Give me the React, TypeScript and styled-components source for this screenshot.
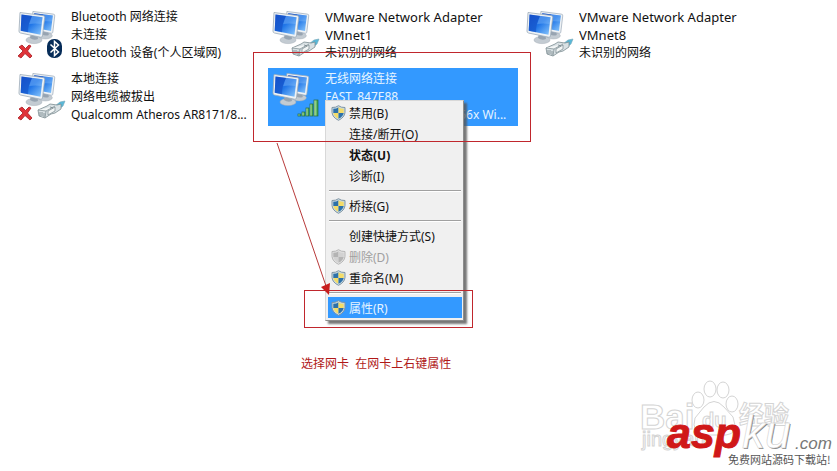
import React from "react";
import styled, { createGlobalStyle, css } from "styled-components";

const uiFont = `"Noto Sans", "Noto Sans CJK SC", sans-serif`;

const GlobalStyle = createGlobalStyle`
  body { margin: 0; background: #fff; }
  * { box-sizing: border-box; }
`;

const Page = styled.main`
  position: relative;
  min-height: 100vh;
  padding: 6px 0 0 14px;
  overflow: hidden;
  font-family: ${uiFont};
  font-size: 12px;
  color: #111;
`;

const ConnectionList = styled.ul`
  display: grid;
  grid-template-columns: repeat(auto-fill, 250px);
  gap: 4px;
  margin: 0;
  padding: 0;
  list-style: none;
`;

const Tile = styled.button<{ $selected?: boolean }>`
  display: flex;
  align-items: flex-start;
  gap: 4px;
  width: 100%;
  min-height: 58px;
  padding: 2px 3px;
  border: 0;
  background: ${(p) => (p.$selected ? "#3399ff" : "transparent")};
  color: ${(p) => (p.$selected ? "#e6f4ff" : "inherit")};
  font: inherit;
  text-align: left;
`;

const TileIcon = styled.svg`
  flex: none;
  width: 50px;
  height: 54px;
`;

const TileText = styled.span`
  display: block;
  flex: 1;
  min-width: 0;
`;

const TileLine = styled.span<{ $latin?: boolean }>`
  display: block;
  overflow: hidden;
  font-size: ${(p) => (p.$latin ? 13 : 12)}px;
  line-height: 18px;
  text-overflow: ellipsis;
  white-space: nowrap;
`;

const Menu = styled.div`
  position: absolute;
  top: 100px;
  left: 325px;
  width: 139px;
  padding: 1px 1px 2px 2px;
  border: 1px solid #d8d8d8;
  border-right-color: #8c8c8c;
  border-bottom-color: #8c8c8c;
  background: #f0f0f0;
  box-shadow: 3px 3px 2px #555c;
`;

const MenuItem = styled.button<{ $bold?: boolean; $active?: boolean }>`
  display: flex;
  align-items: center;
  gap: 3px;
  width: 100%;
  height: 21px;
  padding: 0 3px;
  border: 0;
  background: transparent;
  color: #111;
  font: inherit;
  font-weight: ${(p) => (p.$bold ? 700 : 400)};
  white-space: nowrap;
  &:disabled { color: #a0a0a0; }
  ${(p) => p.$active && css`background: #3399ff; color: #e6f4ff;`}
`;

const IconSlot = styled.span`
  display: flex;
  flex: none;
  width: 15px;
  height: 16px;
`;

const Separator = styled.hr`
  height: 2px;
  margin: 4px 1px 3px;
  border: 0;
  border-top: 1px solid #a0a0a0;
  background: #fff;
`;

const Highlight = styled.div<{ $x: number; $y: number; $w: number; $h: number }>`
  position: absolute;
  left: ${(p) => p.$x}px;
  top: ${(p) => p.$y}px;
  width: ${(p) => p.$w}px;
  height: ${(p) => p.$h}px;
  border: 1px solid #c0272d;
  pointer-events: none;
`;

const Arrow = styled.svg`
  position: absolute;
  top: 142px;
  left: 274px;
  width: 60px;
  height: 156px;
  pointer-events: none;
`;

const Caption = styled.p`
  position: absolute;
  top: 355px;
  left: 301px;
  margin: 0;
  color: #b01818;
  line-height: 18px;
  white-space: pre;
`;

const Watermark = styled.svg`
  position: absolute;
  right: 0;
  bottom: 0;
  width: 201px;
  height: 95px;
`;

type Badge = "bluetooth" | "cable" | "signal";

function Monitor({ x, y, w }: { x: number; y: number; w: number }) {
  return (
    <g transform={`translate(${x} ${y}) scale(${w / 26})`}>
      <ellipse cx="15" cy="28" rx="8" ry="3.6" fill="#c3cbd2" stroke="#a2abb4" strokeWidth=".5" />
      <path d="M12 21h6l1 6q-4 2-8-1z" fill="#97a4b1" />
      <path d="M1 0.500 24 3.500Q26 3.800 25.700 5.500L23.500 24Q23.200 25.500 21.500 25.200L1.500 21Q-.2 20.500 0 19Z" fill="#eef2f5" stroke="#9ba9b8" strokeWidth=".8" />
      <path d="M2.500 2.500 23.500 5.200 21.500 22.700 1.700 18.800Z" fill="url(#screen)" />
      <path d="M2.500 2.500 13 3.900Q9 11 9 20.200L1.700 18.800Z" fill="#0b3db5" opacity=".42" />
      <path d="M13 3.900 23.500 5.200 22.800 12Q16 11 10.200 12Z" fill="#a6d5ff" opacity=".3" />
    </g>
  );
}

function ConnectionIcon({ badge, offline }: { badge: Badge; offline?: boolean }) {
  return (
    <TileIcon viewBox="0 0 50 54" aria-hidden="true">
      <defs>
        <linearGradient id="screen" x1="0" y1="0" x2="1" y2="1">
          <stop offset="0" stopColor="#1c5cd8" />
          <stop offset=".5" stopColor="#2277e8" />
          <stop offset="1" stopColor="#8bc8fc" />
        </linearGradient>
        <linearGradient id="bars" x1="0" y1="0" x2="1" y2="0">
          <stop offset="0" stopColor="#c8f0b4" />
          <stop offset="1" stopColor="#2d9a3f" />
        </linearGradient>
      </defs>
      <Monitor x={15} y={3} w={23} />
      <Monitor x={2} y={4} w={26} />
      {badge === "bluetooth" && (
        <g>
          <rect x="30" y="31" width="15" height="19" rx="7" fill="#062c58" />
          <path d="m33.500 36.500 8 7.500-4 3.500v-14l4 3.500-8 7.500" fill="none" stroke="#fff" strokeWidth="1.500" />
        </g>
      )}
      {badge === "cable" && (
        <g strokeLinejoin="round">
          <path d="M38 36 43 32 48 31 46 36 41 40Z" fill="#58b8d8" stroke="#78a7b9" strokeWidth=".6" />
          <path d="M21 40 30 36 33 34 40 35 44 34 44 39 38 43 34 44 28 48 22 46Z" fill="#d9e1e4" stroke="#7b8b91" strokeWidth=".8" />
          <path d="M21 40 29 41 38 36M29 41 28 48M31 41 38 37 38 41 31 45Z" fill="#f3f6f6" stroke="#849398" strokeWidth=".8" />
          <path d="M23 42v4M25 42v4M27 43v4M33 37l3 1" stroke="#718086" strokeWidth=".8" />
        </g>
      )}
      {badge === "signal" && (
        <g fill="url(#bars)" stroke="#236a3e" strokeWidth=".7">
          <rect x="27" y="44" width="3" height="2" />
          <rect x="31" y="42" width="3" height="4" />
          <rect x="35" y="38" width="3" height="8" />
          <rect x="39" y="34" width="3" height="12" />
          <rect x="43" y="30" width="4" height="16" />
        </g>
      )}
      {offline && (
        <path d="M2 39 5 37 8.500 40.500 12 37 14 38 10.500 43 15 48 13 50 8 45.500 4 50 1 48 6 43Z" fill="#e03238" stroke="#a61920" strokeWidth=".8" />
      )}
    </TileIcon>
  );
}

function Shield({ muted }: { muted?: boolean }) {
  const blue = muted ? "#b4b4b4" : "#2d71a9";
  const yellow = muted ? "#d2d2d2" : "#f3dc68";
  return (
    <svg width="15" height="16" viewBox="0 0 15 16" aria-hidden="true">
      <path d="M7.500 .7Q10 2.700 14 2.500V7.500Q13.500 12.500 7.500 15.300 1.500 12.500 1 7.500V2.500Q5 2.700 7.500 .7Z" fill={muted ? "#e2e2e2" : "#cbdbe4"} stroke={muted ? "#b6b6b6" : "#7f95a3"} />
      <path d="M7.500 2.300V8H2.300V3.800Q5.500 3.800 7.500 2.300Z" fill={blue} />
      <path d="M7.500 2.300Q9.500 3.800 12.700 3.800V8H7.500Z" fill={yellow} />
      <path d="M2.300 8H7.500V13.800Q3 11.800 2.300 8Z" fill={yellow} />
      <path d="M7.500 8H12.700Q12 11.800 7.500 13.800Z" fill={blue} />
    </svg>
  );
}

type Connection = {
  lines: { text: string; latin?: boolean }[];
  badge: Badge;
  offline?: boolean;
  selected?: boolean;
};

const connections: Connection[] = [
  { badge: "bluetooth", offline: true, lines: [{ text: "Bluetooth 网络连接" }, { text: "未连接" }, { text: "Bluetooth 设备(个人区域网)" }] },
  { badge: "cable", lines: [{ text: "VMware Network Adapter", latin: true }, { text: "VMnet1", latin: true }, { text: "未识别的网络" }] },
  { badge: "cable", lines: [{ text: "VMware Network Adapter", latin: true }, { text: "VMnet8", latin: true }, { text: "未识别的网络" }] },
  { badge: "cable", offline: true, lines: [{ text: "本地连接" }, { text: "网络电缆被拔出" }, { text: "Qualcomm Atheros AR8171/8..." }] },
  { badge: "signal", selected: true, lines: [{ text: "无线网络连接" }, { text: "FAST_847E88" }, { text: "Qualcomm Atheros AR956x Wi..." }] },
];

type Entry = { label: string; shield?: boolean; bold?: boolean; disabled?: boolean; active?: boolean };

const menuGroups: Entry[][] = [
  [{ label: "禁用(B)", shield: true }, { label: "连接/断开(O)" }, { label: "状态(U)", bold: true }, { label: "诊断(I)" }],
  [{ label: "桥接(G)", shield: true }],
  [{ label: "创建快捷方式(S)" }, { label: "删除(D)", shield: true, disabled: true }, { label: "重命名(M)", shield: true }],
  [{ label: "属性(R)", shield: true, active: true }],
];

function SiteWatermark() {
  return (
    <Watermark viewBox="0 0 201 95">
      <g fill="#fff" stroke="#d4d4d4" strokeWidth="1">
        <text x="4" y="53" fontFamily="Liberation Sans, sans-serif" fontWeight="700" fontSize="35">Bai</text>
        <ellipse cx="62" cy="24" rx="6" ry="8" />
        <ellipse cx="74" cy="13" rx="6" ry="8" />
        <ellipse cx="87" cy="14" rx="6" ry="8" />
        <ellipse cx="96" cy="28" rx="6" ry="8" />
        <path d="M68 31Q78 20 88 31L97 41Q103 58 90 59H68Q55 57 59 42Z" />
        <text x="66" y="51" fontFamily="Liberation Sans, sans-serif" fontWeight="700" fontSize="20">du</text>
        <text x="103" y="48" fontFamily="Noto Sans CJK SC, sans-serif" fontWeight="700" fontSize="25">经验</text>
        <text x="6" y="70" fontFamily="Liberation Sans, sans-serif" fontSize="20">jingyan</text>
      </g>
      <g fontFamily="Liberation Sans, sans-serif" fontStyle="italic">
        <text x="31" y="72" fontWeight="700" fontSize="43" fill="#d01818" stroke="#d01818">asp</text>
        <text x="107" y="73" fontSize="46" fill="#888">ku</text>
        <text x="106" y="72" fontSize="46" fill="#fff" stroke="#ccc" strokeWidth=".5">ku</text>
        <text x="159" y="73" fontSize="17" fill="#777">.com</text>
      </g>
      <text x="92" y="88" fontFamily="Noto Sans CJK SC, sans-serif" fontSize="11" fill="#555">免费网站源码下载站!</text>
    </Watermark>
  );
}

export default function App() {
  return (
    <Page>
      <GlobalStyle />
      <ConnectionList>
        {connections.map((c, i) => (
          <li key={i}>
            <Tile type="button" $selected={c.selected}>
              <ConnectionIcon badge={c.badge} offline={c.offline} />
              <TileText>
                {c.lines.map((line) => (
                  <TileLine key={line.text} $latin={line.latin}>{line.text}</TileLine>
                ))}
              </TileText>
            </Tile>
          </li>
        ))}
      </ConnectionList>
      <Menu role="menu">
        {menuGroups.map((group, g) => (
          <React.Fragment key={g}>
            {g > 0 && <Separator />}
            {group.map((e) => (
              <MenuItem key={e.label} type="button" role="menuitem" disabled={e.disabled} $bold={e.bold} $active={e.active}>
                <IconSlot>{e.shield && <Shield muted={e.disabled} />}</IconSlot>
                {e.label}
              </MenuItem>
            ))}
          </React.Fragment>
        ))}
      </Menu>
      <Highlight $x={253} $y={52} $w={278} $h={90} />
      <Highlight $x={304} $y={290} $w={169} $h={38} />
      <Arrow viewBox="0 0 60 156" aria-hidden="true">
        <path d="M3 1 52 144" stroke="#b83a3a" />
        <path d="M47 145 56 141 55 153Z" fill="#c81e1e" />
      </Arrow>
      <Caption>选择网卡  在网卡上右键属性</Caption>
      <SiteWatermark />
    </Page>
  );
}
